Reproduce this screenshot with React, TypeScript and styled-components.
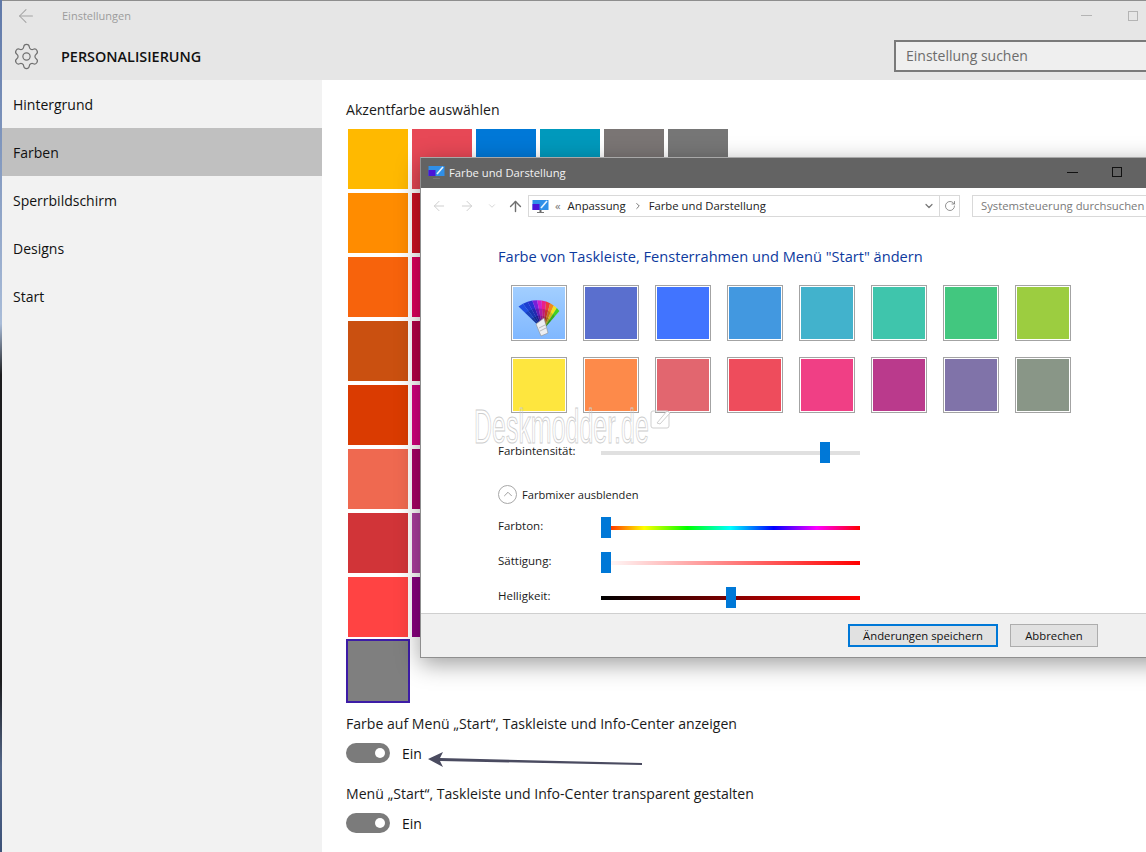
import React from "react";
import styled, { createGlobalStyle } from "styled-components";
import { ArrowLeft, ArrowRight, ArrowUp, ChevronDown, ChevronRight, ChevronUp, RotateCw, Settings } from "lucide-react";

const GlobalStyle = createGlobalStyle`
  * { box-sizing: border-box; }
  html, body { margin: 0; padding: 0; background: #fff; }
  body { font-family: "Open Sans", "Noto Sans", sans-serif; color: #111; }
`;

const accentRows = [
  ["#ffb900", "#e74856", "#0078d7", "#0099bc", "#7a7574", "#767676"],
  ["#ff8c00", "#cf1124", "#0063b1", "#2d7d9a", "#5d5a58", "#4c4a48"],
  ["#f7630c", "#e0005e", "#8e8cd8", "#00b7c3", "#68768a", "#69797e"],
  ["#ca5010", "#b80048", "#6b69d6", "#038387", "#515c6b", "#4a5459"],
  ["#da3b01", "#d6007f", "#8764b8", "#00b294", "#567c73", "#647c64"],
  ["#ef6950", "#ab0068", "#744da9", "#018574", "#486860", "#525e54"],
  ["#d13438", "#ae3ea0", "#b146c2", "#00cc6a", "#498205", "#847545"],
  ["#ff4343", "#8a0080", "#881798", "#10893e", "#107c10", "#7e735f"],
];

const dialogColors = [
  ["", "#5a6fce", "#4174ff", "#4298e0", "#42b2cc", "#3fc5ac", "#42c77f", "#9ccd40"],
  ["#fee63e", "#fd8a4a", "#e2666f", "#ee4c5c", "#f03f85", "#ba3a8c", "#8073a9", "#899687"],
];

const fanColors = ["#1f4fe0", "#1c3fd0", "#2a30d0", "#7a1fd8", "#d01fc8", "#e8208a", "#ee3a3a", "#f08a1e", "#f4e020", "#44d020"];

const sections = ["Hintergrund", "Farben", "Sperrbildschirm", "Designs", "Start"];

const Page = styled.div`
  position: relative;
  display: flex;
  width: 1146px;
  height: 852px;
  overflow: hidden;
`;

const DesktopEdge = styled.div`
  width: 2px;
  flex: none;
  background: linear-gradient(180deg, #5f78a8 0%, #a9bcd8 38%, #1c1c1e 44%, #1c1c1e 80%, #55698c 90%, #3d5278 100%);
`;

const SettingsWindow = styled.div`
  flex: 1;
  min-width: 0;
  display: flex;
  flex-direction: column;
`;

const TitleBar = styled.div`
  height: 32px;
  flex: none;
  display: flex;
  align-items: center;
  background: #e6e6e6;
  border-top: 1px solid #8e8e8e;
  padding: 0 8px 2px 0;
  color: #a3a3a3;
`;

const BackSlot = styled.div`
  width: 60px;
  display: flex;
  padding-left: 13px;
`;

const TitleText = styled.span`
  font-size: 11px;
  color: #9c9c9c;
`;

const WindowControls = styled.div`
  margin-left: auto;
  display: flex;
  align-items: center;
  gap: 36px;
`;

const MinimizeGlyph = styled.i<{ $color: string }>`
  display: block;
  width: 11px;
  height: 1px;
  background: ${(p) => p.$color};
`;

const MaximizeGlyph = styled.i<{ $color: string }>`
  display: block;
  width: 10px;
  height: 10px;
  border: 1px solid ${(p) => p.$color};
`;

const HeaderBar = styled.div`
  height: 48px;
  flex: none;
  display: flex;
  align-items: center;
  background: #e6e6e6;
  color: #707070;
`;

const GearSlot = styled.div`
  width: 59px;
  display: flex;
  padding-left: 10px;
`;

const PageTitle = styled.h1`
  margin: 0;
  font-size: 14.4px;
  font-weight: 600;
  color: #111;
`;

const SearchBox = styled.div`
  margin-left: auto;
  width: 252px;
  height: 32px;
  display: flex;
  align-items: center;
  padding: 0 0 2px 10px;
  background: #efefef;
  border: 2px solid #7a7a7a;
  border-right: 0;
  font-size: 14px;
  color: #6c6c6c;
`;

const Body = styled.div`
  flex: 1;
  min-height: 0;
  display: flex;
`;

const Sidebar = styled.nav`
  width: 320px;
  flex: none;
  background: #f2f2f2;
`;

const SidebarItem = styled.div<{ $active?: boolean }>`
  height: 48px;
  display: flex;
  align-items: center;
  padding-left: 11px;
  font-size: 14px;
  background: ${(p) => (p.$active ? "#c0c0c0" : "transparent")};
`;

const Content = styled.main`
  flex: 1;
  position: relative;
  padding: 20px 0 0 24px;
  background: #fff;
`;

const SectionLabel = styled.div<{ $gap: number }>`
  height: 20px;
  line-height: 20px;
  font-size: 14.08px;
  color: #1a1a1a;
  margin-top: ${(p) => p.$gap}px;
`;

const AccentGrid = styled.div`
  display: grid;
  grid-template-columns: repeat(6, 60px);
  grid-auto-rows: 60px;
  gap: 4px;
  margin: 9px 0 0 2px;
`;

const AccentSwatch = styled.div<{ $color: string; $selected?: boolean }>`
  background: ${(p) => p.$color};
  outline: ${(p) => (p.$selected ? "2px solid #3d1ca6" : "none")};
`;

const ToggleRow = styled.div`
  display: flex;
  align-items: center;
  gap: 12px;
  margin-top: 9px;
  font-size: 14px;
`;

const Toggle = styled.div`
  width: 44px;
  height: 20px;
  display: flex;
  align-items: center;
  justify-content: flex-end;
  padding-right: 5px;
  border-radius: 10px;
  background: #7b7b7b;
`;

const ToggleKnob = styled.i`
  width: 10px;
  height: 10px;
  border-radius: 50%;
  background: #fff;
`;

const AnnotationArrow = styled.svg`
  position: absolute;
  left: 104px;
  top: 668px;
`;

const Dialog = styled.div`
  position: absolute;
  left: 420px;
  top: 157px;
  width: 760px;
  height: 501px;
  display: flex;
  flex-direction: column;
  background: #fff;
  border: 1px solid #8f8f8f;
  border-top-color: #a8a8a8;
  box-shadow: 0 6px 22px rgba(0, 0, 0, 0.38);
`;

const DialogTitleBar = styled.div`
  height: 30px;
  flex: none;
  display: flex;
  align-items: center;
  padding: 0 57px 2px 7px;
  background: #636363;
`;

const DialogTitle = styled.span`
  margin-left: 4px;
  font-size: 11.25px;
  color: #f2f2f2;
`;

const DialogControls = styled.div`
  margin-left: auto;
  display: flex;
  align-items: center;
  gap: 34px;
`;

const NavRow = styled.div`
  display: flex;
  align-items: center;
  height: 22px;
  margin-top: 7px;
  flex: none;
`;

const NavButtons = styled.div`
  width: 107px;
  display: flex;
  align-items: center;
  padding-left: 10px;
  gap: 12px;
`;

const UpButton = styled(ArrowUp)`
  margin-left: -2px;
`;

const AddressBar = styled.div`
  width: 432px;
  height: 22px;
  display: flex;
  align-items: center;
  padding: 0 0 0 3px;
  border: 1px solid #d9d9d9;
  font-size: 11.3px;
  color: #222;
`;

const Crumb = styled.span`
  white-space: nowrap;
  padding-bottom: 2px;
`;

const CrumbArrows = styled.span`
  margin: 0 7px 2px 6px;
  color: #777;
`;

const CrumbChevron = styled(ChevronRight)`
  margin: 0 6px 0 7px;
`;

const AddressEnd = styled.div`
  margin-left: auto;
  display: flex;
  align-items: center;
  height: 100%;
  color: #777;
`;

const RefreshCell = styled.div`
  width: 20px;
  height: 100%;
  display: flex;
  align-items: center;
  justify-content: center;
  border-left: 1px solid #d9d9d9;
  margin-left: 4px;
`;

const DialogSearch = styled.div`
  margin-left: 12px;
  flex: 1;
  height: 22px;
  display: flex;
  align-items: center;
  padding: 0 0 2px 8px;
  border: 1px solid #d9d9d9;
  font-size: 11.3px;
  color: #7a7a7a;
  white-space: nowrap;
`;

const DialogBody = styled.div`
  position: relative;
  flex: 1;
  min-height: 0;
  padding-left: 77px;
`;

const DialogHeading = styled.h2`
  margin: 29px 0 0;
  height: 20px;
  line-height: 20px;
  font-size: 14.6px;
  font-weight: 400;
  color: #0d3a9e;
  white-space: nowrap;
`;

const ColorGrid = styled.div`
  display: grid;
  grid-template-columns: repeat(8, 56px);
  grid-auto-rows: 56px;
  gap: 16px;
  margin: 19px 0 0 13px;
`;

const ColorTile = styled.div<{ $color?: string }>`
  border: 1px solid #a3a3a3;
  box-shadow: inset 0 0 0 1px #fff;
  background: ${(p) => p.$color || "linear-gradient(180deg, #a3cfff, #7fb7ff)"};
`;

const Watermark = styled.div`
  position: absolute;
  left: 53px;
  top: 186px;
  font-family: "Liberation Sans", sans-serif;
  font-size: 48px;
  line-height: 48px;
  color: transparent;
  -webkit-text-stroke: 1px #cdcdcd;
  transform: scaleX(0.52);
  transform-origin: left top;
  white-space: nowrap;
`;

const WatermarkMark = styled.svg`
  position: absolute;
  left: 229px;
  top: 191px;
`;

const SliderRow = styled.div<{ $gap: number }>`
  position: relative;
  display: flex;
  align-items: center;
  height: 21px;
  margin-top: ${(p) => p.$gap}px;
`;

const SliderLabel = styled.span`
  width: 103px;
  padding-bottom: 5px;
  font-size: 11.5px;
  color: #1a1a1a;
`;

const SliderTrack = styled.div<{ $fill: string }>`
  position: relative;
  width: 259px;
  height: 4px;
  background: ${(p) => p.$fill};
`;

const SliderThumb = styled.i<{ $left: number }>`
  position: absolute;
  left: ${(p) => p.$left}px;
  top: -9px;
  width: 10px;
  height: 21px;
  background: #0078d7;
`;

const MixerToggle = styled.div`
  display: flex;
  align-items: center;
  gap: 5px;
  height: 20px;
  margin-top: 21px;
  font-size: 11.1px;
  color: #1a1a1a;
`;

const MixerCircle = styled.div`
  width: 19px;
  height: 19px;
  display: flex;
  align-items: center;
  justify-content: center;
  border: 1px solid #a8a8a8;
  border-radius: 50%;
  color: #8a8a8a;
`;

const DialogFooter = styled.div`
  height: 44px;
  flex: none;
  display: flex;
  align-items: center;
  justify-content: flex-end;
  gap: 12px;
  padding-right: 81px;
  background: #f0f0f0;
  border-top: 1px solid #cfcfcf;
`;

const FooterButton = styled.button<{ $primary?: boolean; $width: number }>`
  width: ${(p) => p.$width}px;
  height: 23px;
  padding: 0;
  font-family: inherit;
  font-size: 11.3px;
  color: #111;
  background: #e1e1e1;
  border: ${(p) => (p.$primary ? "2px solid #0078d7" : "1px solid #adadad")};
`;

const MonitorIcon = () => (
  <svg width="17" height="14" viewBox="0 0 17 14">
    <rect x="0.5" y="1" width="16" height="10" fill="#2f8fe8" />
    <rect x="0.5" y="5" width="7" height="6" fill="#4a14d8" />
    <path d="M9 9 L15 2" stroke="#e8f4ff" strokeWidth="1.6" />
    <rect x="7.5" y="11" width="2" height="2" fill="#666" />
    <rect x="5" y="13" width="7" height="1" fill="#777" />
  </svg>
);

// one wedge of the colour fan, angle in degrees from straight up
const wedge = (from: number, to: number, r1: number, r2: number) => {
  const px = 31;
  const py = 44;
  const pt = (deg: number, r: number) => {
    const a = (deg * Math.PI) / 180;
    return `${(px + r * Math.sin(a)).toFixed(1)} ${(py - r * Math.cos(a)).toFixed(1)}`;
  };
  return `M${px} ${py} L${pt(from, r1)} L${pt(to, r2)} Z`;
};

const PaletteFan = () => (
  <svg width="54" height="54" viewBox="0 0 54 54">
    {fanColors.map((color, i) => {
      const from = -46 + i * 8.7;
      const to = from + 8.7;
      const r1 = 34 - i * 0.9;
      const r2 = 34 - (i + 1) * 0.9;
      return (
        <g key={i}>
          <path d={wedge(from, to, r1, r2)} fill={color} />
          <path d={wedge(from, to, r1 * 0.72, r2 * 0.72)} fill="#000" opacity="0.16" />
          <path d={wedge(from, to, r1 * 0.48, r2 * 0.48)} fill="#000" opacity="0.18" />
        </g>
      );
    })}
    <path d="M24 38 L32 32 L36 47 L29 50 Z" fill="#eceef2" stroke="#8f8f8f" strokeWidth="0.6" />
    <path d="M27 42 L33 39 M28 45 L34 42" stroke="#a0a0a0" strokeWidth="0.7" />
  </svg>
);

export default function App() {
  return (
    <Page>
      <GlobalStyle />
      <DesktopEdge />
      <SettingsWindow>
        <TitleBar>
          <BackSlot>
            <ArrowLeft size={22} strokeWidth={1.1} />
          </BackSlot>
          <TitleText>Einstellungen</TitleText>
          <WindowControls>
            <MinimizeGlyph $color="#b4b4b4" />
            <MaximizeGlyph $color="#b4b4b4" />
          </WindowControls>
        </TitleBar>
        <HeaderBar>
          <GearSlot>
            <Settings size={29} strokeWidth={1} />
          </GearSlot>
          <PageTitle>PERSONALISIERUNG</PageTitle>
          <SearchBox>Einstellung suchen</SearchBox>
        </HeaderBar>
        <Body>
          <Sidebar>
            {sections.map((name) => (
              <SidebarItem key={name} $active={name === "Farben"}>
                {name}
              </SidebarItem>
            ))}
          </Sidebar>
          <Content>
            <SectionLabel $gap={0}>Akzentfarbe auswählen</SectionLabel>
            <AccentGrid>
              {accentRows.flat().map((color, i) => (
                <AccentSwatch key={i} $color={color} />
              ))}
              <AccentSwatch $color="#7f7f7f" $selected />
            </AccentGrid>
            <SectionLabel $gap={13}>Farbe auf Menü „Start“, Taskleiste und Info-Center anzeigen</SectionLabel>
            <ToggleRow>
              <Toggle>
                <ToggleKnob />
              </Toggle>
              Ein
            </ToggleRow>
            <SectionLabel $gap={21}>Menü „Start“, Taskleiste und Info-Center transparent gestalten</SectionLabel>
            <ToggleRow>
              <Toggle>
                <ToggleKnob />
              </Toggle>
              Ein
            </ToggleRow>
            <AnnotationArrow width="220" height="22" viewBox="0 0 220 22">
              <path d="M2 11 L17 4 L14 10 L216 15 L216 17 L14 13 L17 19 Z" fill="#4a4b60" />
            </AnnotationArrow>
          </Content>
        </Body>
      </SettingsWindow>

      <Dialog>
        <DialogTitleBar>
          <MonitorIcon />
          <DialogTitle>Farbe und Darstellung</DialogTitle>
          <DialogControls>
            <MinimizeGlyph $color="#111" />
            <MaximizeGlyph $color="#111" />
          </DialogControls>
        </DialogTitleBar>
        <NavRow>
          <NavButtons>
            <ArrowLeft size={16} strokeWidth={1.5} color="#cfcfcf" />
            <ArrowRight size={16} strokeWidth={1.5} color="#cfcfcf" />
            <ChevronDown size={10} strokeWidth={2} color="#cfcfcf" />
            <UpButton size={17} strokeWidth={2} color="#6f6f6f" />
          </NavButtons>
          <AddressBar>
            <MonitorIcon />
            <CrumbArrows>«</CrumbArrows>
            <Crumb>Anpassung</Crumb>
            <CrumbChevron size={10} strokeWidth={2.4} color="#777" />
            <Crumb>Farbe und Darstellung</Crumb>
            <AddressEnd>
              <ChevronDown size={12} strokeWidth={2.4} />
              <RefreshCell>
                <RotateCw size={12} strokeWidth={1.6} />
              </RefreshCell>
            </AddressEnd>
          </AddressBar>
          <DialogSearch>Systemsteuerung durchsuchen</DialogSearch>
        </NavRow>
        <DialogBody>
          <DialogHeading>Farbe von Taskleiste, Fensterrahmen und Menü "Start" ändern</DialogHeading>
          <ColorGrid>
            {dialogColors.flat().map((color, i) => (
              <ColorTile key={i} $color={color}>
                {color === "" && <PaletteFan />}
              </ColorTile>
            ))}
          </ColorGrid>
          <Watermark>Deskmodder.de</Watermark>
          <WatermarkMark width="22" height="22" viewBox="0 0 22 22">
            <rect x="1" y="3" width="18" height="17" rx="2" fill="none" stroke="#cfcfcf" />
            <path d="M7 15 L17 3 L20 5 L10 16 Z" fill="#fff" stroke="#cfcfcf" />
          </WatermarkMark>
          <SliderRow $gap={29}>
            <SliderLabel>Farbintensität:</SliderLabel>
            <SliderTrack $fill="#e0e0e0">
              <SliderThumb $left={219} />
            </SliderTrack>
          </SliderRow>
          <MixerToggle>
            <MixerCircle>
              <ChevronUp size={14} strokeWidth={1.4} />
            </MixerCircle>
            Farbmixer ausblenden
          </MixerToggle>
          <SliderRow $gap={13}>
            <SliderLabel>Farbton:</SliderLabel>
            <SliderTrack $fill="linear-gradient(90deg, #f00, #ff0, #0f0, #0ff, #00f, #f0f, #f00)">
              <SliderThumb $left={0} />
            </SliderTrack>
          </SliderRow>
          <SliderRow $gap={14}>
            <SliderLabel>Sättigung:</SliderLabel>
            <SliderTrack $fill="linear-gradient(90deg, #fff, #f00)">
              <SliderThumb $left={0} />
            </SliderTrack>
          </SliderRow>
          <SliderRow $gap={14}>
            <SliderLabel>Helligkeit:</SliderLabel>
            <SliderTrack $fill="linear-gradient(90deg, #000, #f00)">
              <SliderThumb $left={125} />
            </SliderTrack>
          </SliderRow>
        </DialogBody>
        <DialogFooter>
          <FooterButton $primary $width={150}>Änderungen speichern</FooterButton>
          <FooterButton $width={88}>Abbrechen</FooterButton>
        </DialogFooter>
      </Dialog>
    </Page>
  );
}
